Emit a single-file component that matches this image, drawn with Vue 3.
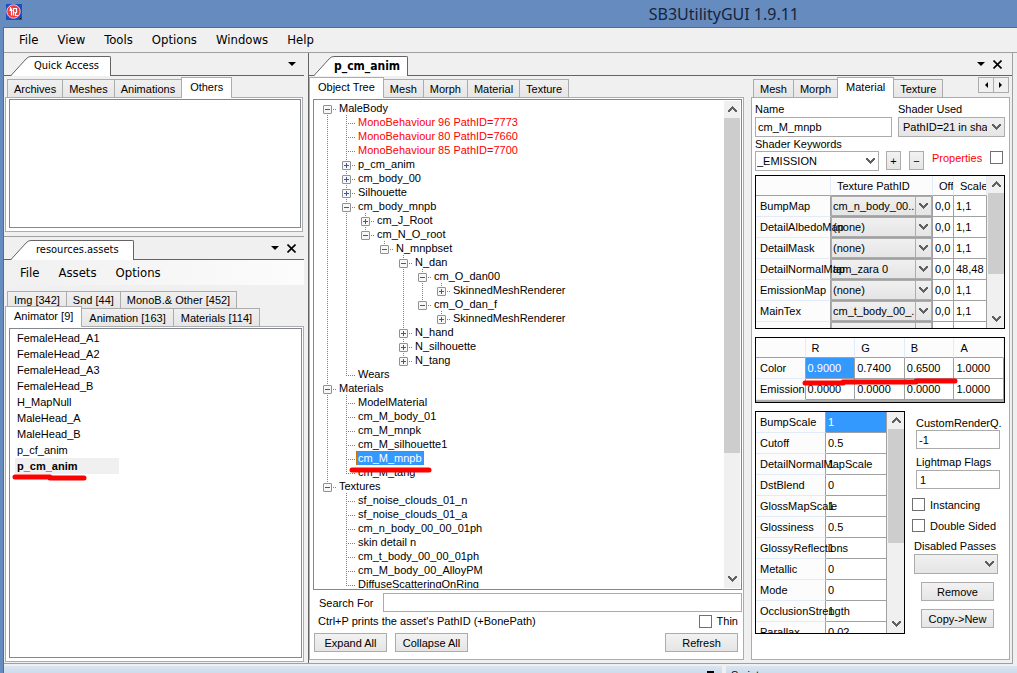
<script setup>
import { ref } from 'vue'

const mainMenu = ['File', 'View', 'Tools', 'Options', 'Windows', 'Help']
const assetMenu = ['File', 'Assets', 'Options']
const quickTabs = ['Archives', 'Meshes', 'Animations', 'Others']
const upperTabs = ['Img [342]', 'Snd [44]', 'MonoB.& Other [452]']
const lowerTabs = ['Animator [9]', 'Animation [163]', 'Materials [114]']
const treeTabs = ['Object Tree', 'Mesh', 'Morph', 'Material', 'Texture']
const detailTabs = ['Mesh', 'Morph', 'Material', 'Texture']

const animators = [
  'FemaleHead_A1', 'FemaleHead_A2', 'FemaleHead_A3', 'FemaleHead_B',
  'H_MapNull', 'MaleHead_A', 'MaleHead_B', 'p_cf_anim', 'p_cm_anim',
]

// [level, label, toggle sign, state]
const nodes = [
  [0, 'MaleBody', '-'],
  [1, 'MonoBehaviour 96 PathID=7773', '', 'alert'],
  [1, 'MonoBehaviour 80 PathID=7660', '', 'alert'],
  [1, 'MonoBehaviour 85 PathID=7700', '', 'alert'],
  [1, 'p_cm_anim', '+'],
  [1, 'cm_body_00', '+'],
  [1, 'Silhouette', '+'],
  [1, 'cm_body_mnpb', '-'],
  [2, 'cm_J_Root', '+'],
  [2, 'cm_N_O_root', '-'],
  [3, 'N_mnpbset', '-'],
  [4, 'N_dan', '-'],
  [5, 'cm_O_dan00', '-'],
  [6, 'SkinnedMeshRenderer', '+'],
  [5, 'cm_O_dan_f', '-'],
  [6, 'SkinnedMeshRenderer', '+'],
  [4, 'N_hand', '+'],
  [4, 'N_silhouette', '+'],
  [4, 'N_tang', '+'],
  [1, 'Wears', ''],
  [0, 'Materials', '-'],
  [1, 'ModelMaterial', ''],
  [1, 'cm_M_body_01', ''],
  [1, 'cm_M_mnpk', ''],
  [1, 'cm_M_silhouette1', ''],
  [1, 'cm_M_mnpb', '', 'selected'],
  [1, 'cm_M_tang', ''],
  [0, 'Textures', '-'],
  [1, 'sf_noise_clouds_01_n', ''],
  [1, 'sf_noise_clouds_01_a', ''],
  [1, 'cm_n_body_00_00_01ph', ''],
  [1, 'skin detail n', ''],
  [1, 'cm_t_body_00_00_01ph', ''],
  [1, 'cm_M_body_00_AlloyPM', ''],
  [1, 'DiffuseScatteringOnRing', ''],
]

// A guide continues below a row when a later sibling exists at that level.
function continues(index, level) {
  for (let i = index + 1; i < nodes.length; i++) {
    if (nodes[i][0] < level) return false
    if (nodes[i][0] === level) return true
  }
  return false
}

const tree = nodes.map(([level, label, sign, state], i) => ({
  label, sign, state,
  guides: Array.from({ length: level }, (_, l) => continues(i, l)),
  top: i > 0,
  bottom: continues(i, level),
}))

const textures = [
  ['BumpMap', 'cm_n_body_00...', '1,1'],
  ['DetailAlbedoMap', '(none)', '1,1'],
  ['DetailMask', '(none)', '1,1'],
  ['DetailNormalMap', 'tam_zara 0', '48,48'],
  ['EmissionMap', '(none)', '1,1'],
  ['MainTex', 'cm_t_body_00_...', '1,1'],
  ['MetallicGlossMap', 'cm_t_body_00_...', '1,1'],
]
const colors = [
  ['Color', '0.9000', '0.7400', '0.6500', '1.0000'],
  ['Emission', '0.0000', '0.0000', '0.0000', '1.0000'],
]
const values = [
  ['BumpScale', '1'], ['Cutoff', '0.5'], ['DetailNormalMapScale', '1'], ['DstBlend', '0'],
  ['GlossMapScale', '1'], ['Glossiness', '0.5'], ['GlossyReflections', '1'], ['Metallic', '0'],
  ['Mode', '0'], ['OcclusionStrength', '1'], ['Parallax', '0.02'],
]

const search = ref('')
const name = ref('cm_M_mnpb')
const queue = ref('-1')
const flags = ref('1')
</script>

<template>
  <div class="window">
    <svg class="defs" width="0" height="0" aria-hidden="true">
      <symbol id="down" viewBox="0 0 9 7"><path d="M0 0h2v1h1v1h1v1h1v-1h1v-1h1v-1h2v2h-1v1h-1v1h-1v1h-1v1h-1v-1h-1v-1h-1v-1h-1v-1h-1z" fill="#606060" /></symbol>
      <symbol id="up" viewBox="0 0 9 7"><path d="M0 6h2v-1h1v-1h1v-1h1v1h1v1h1v1h2v-2h-1v-1h-1v-1h-1v-1h-1v-1h-1v1h-1v1h-1v1h-1v1h-1z" fill="#606060" /></symbol>
      <symbol id="caret" viewBox="0 0 8 4"><path d="M0 0h8l-4 4z" fill="#000" /></symbol>
      <symbol id="close" viewBox="0 0 9 9"><path d="M0.5 0.5l8 8M8.5 0.5l-8 8" stroke="#000" stroke-width="1.6" /></symbol>
      <symbol id="slant" viewBox="0 0 20 20"><path d="M0 20L15 3Q17 0.500 20 0.500V20z" fill="#fff" /><path d="M0 19.500L15 3Q17 0.500 20 0.500" fill="none" stroke="#646464" /></symbol>
    </svg>

    <header class="titlebar">
      <svg class="logo" width="16" height="16" viewBox="0 0 16 16" aria-hidden="true">
        <rect width="16" height="16" fill="#1d4fc0" />
        <circle cx="7.500" cy="7.500" r="6.700" fill="#f03c3c" stroke="#f4c9c9" />
        <path d="M4.500 3v3.500M3.500 6.500h3M5.500 4.500v7M7.500 11.500v-7h3v4h-2M9.500 8.500v3h3" fill="none" stroke="#fff" stroke-width="1.200" />
        <rect x="14" y="14" width="1" height="1" />
      </svg>
      <h1>SB3UtilityGUI 1.9.11</h1>
    </header>

    <div class="client">
      <nav class="menu main-menu">
        <button v-for="m in mainMenu" :key="m">{{ m }}</button>
      </nav>

      <main class="dock">
        <aside class="left">
          <section class="pane quick">
            <div class="caption">
              <svg class="slant" width="20" height="20"><use href="#slant" /></svg>
              <h2>Quick Access</h2>
              <span class="tools"><button aria-label="Menu"><svg width="8" height="4"><use href="#caret" /></svg></button></span>
            </div>
            <div class="tabs" role="tablist">
              <button v-for="t in quickTabs" :key="t" role="tab" :class="{ active: t === 'Others' }">{{ t }}</button>
            </div>
            <div class="page"><div class="listbox"></div></div>
          </section>

          <section class="pane assets">
            <div class="caption">
              <svg class="slant" width="20" height="20"><use href="#slant" /></svg>
              <h2>resources.assets</h2>
              <span class="tools">
                <button aria-label="Menu"><svg width="8" height="4"><use href="#caret" /></svg></button>
                <button aria-label="Close"><svg width="9" height="9"><use href="#close" /></svg></button>
              </span>
            </div>
            <nav class="menu asset-menu">
              <button v-for="m in assetMenu" :key="m">{{ m }}</button>
            </nav>
            <div class="tabs upper" role="tablist">
              <button v-for="t in upperTabs" :key="t" role="tab">{{ t }}</button>
            </div>
            <div class="tabs lower" role="tablist">
              <button v-for="t in lowerTabs" :key="t" role="tab" :class="{ active: t === 'Animator [9]' }">{{ t }}</button>
            </div>
            <div class="page">
              <ul class="listbox animators">
                <li v-for="a in animators" :key="a" :class="{ opened: a === 'p_cm_anim' }">
                  {{ a }}
                  <svg v-if="a === 'p_cm_anim'" class="mark" width="74" height="8"><path d="M2 4H37M37 5H71" /></svg>
                </li>
              </ul>
            </div>
          </section>
        </aside>

        <section class="document">
          <div class="caption">
            <svg class="slant" width="20" height="20"><use href="#slant" /></svg>
            <h2 class="bold">p_cm_anim</h2>
            <span class="tools">
              <button aria-label="Menu"><svg width="8" height="4"><use href="#caret" /></svg></button>
              <button aria-label="Close"><svg width="9" height="9"><use href="#close" /></svg></button>
            </span>
          </div>
          <div class="split">
            <section class="pane objects">
              <div class="tabs" role="tablist">
                <button v-for="t in treeTabs" :key="t" role="tab" :class="{ active: t === 'Object Tree' }">{{ t }}</button>
              </div>
              <div class="page">
                <div class="treebox">
                  <ul class="tree">
                    <li v-for="(n, i) in tree" :key="i">
                      <i v-for="(g, l) in n.guides" :key="l" class="cell" :class="{ full: g }"></i>
                      <i class="cell joint" :class="{ above: n.top, below: n.bottom }">
                        <svg v-if="n.sign" width="9" height="9" viewBox="0 0 9 9">
                          <rect x="0.500" y="0.500" width="8" height="8" rx="0.500" fill="#f7f7f7" stroke="#919191" />
                          <path d="M2 4.500h5" stroke="#3b5a9d" />
                          <path v-if="n.sign === '+'" d="M4.500 2v5" stroke="#3b5a9d" />
                        </svg>
                      </i>
                      <span :class="n.state">{{ n.label }}</span>
                      <svg v-if="n.state === 'selected'" class="mark" width="86" height="8"><path d="M3 4H80" /></svg>
                    </li>
                  </ul>
                  <div class="scroll tree-scroll">
                    <button aria-label="Scroll up"><svg width="9" height="7"><use href="#up" /></svg></button>
                    <div class="track"><div class="thumb"></div></div>
                    <button aria-label="Scroll down"><svg width="9" height="7"><use href="#down" /></svg></button>
                  </div>
                </div>
                <div class="search">
                  <label for="search">Search For</label>
                  <input id="search" v-model="search" type="text">
                </div>
                <div class="hint">
                  <span>Ctrl+P prints the asset's PathID (+BonePath)</span>
                  <label><input type="checkbox">Thin</label>
                </div>
                <div class="actions">
                  <button class="push">Expand All</button>
                  <button class="push">Collapse All</button>
                  <button class="push last">Refresh</button>
                </div>
              </div>
            </section>

            <section class="pane details">
              <div class="tabs" role="tablist">
                <button v-for="t in detailTabs" :key="t" role="tab" :class="{ active: t === 'Material' }">{{ t }}</button>
                <span class="spin">
                  <button aria-label="Previous tabs"><svg width="4" height="6"><path d="M4 0v6l-3-3z" /></svg></button>
                  <button aria-label="Next tabs"><svg width="4" height="6"><path d="M0 0v6l3-3z" /></svg></button>
                </span>
              </div>
              <div class="page">
                <div class="fields">
                  <label for="name">Name</label>
                  <label for="shader">Shader Used</label>
                  <input id="name" v-model="name" type="text">
                  <div class="combo">
                    <select id="shader"><option>PathID=21 in shader</option></select>
                    <svg width="9" height="7"><use href="#down" /></svg>
                  </div>
                </div>
                <label class="keywords-label" for="keywords">Shader Keywords</label>
                <div class="keywords">
                  <div class="combo editable">
                    <select id="keywords"><option>_EMISSION</option></select>
                    <svg width="9" height="7"><use href="#down" /></svg>
                  </div>
                  <button class="push small">+</button>
                  <button class="push small">−</button>
                  <label class="properties">Properties<input type="checkbox"></label>
                </div>

                <div class="grid textures">
                  <table>
                    <colgroup><col class="c-name"><col><col class="c-off"><col class="c-scale"></colgroup>
                    <thead><tr><th></th><th>Texture PathID</th><th>Offset</th><th>Scale</th></tr></thead>
                    <tbody>
                      <tr v-for="t in textures" :key="t[0]">
                        <th>{{ t[0] }}</th>
                        <td class="holder">
                          <div class="combo flat">
                            <select :aria-label="t[0]"><option>{{ t[1] }}</option></select>
                            <svg width="9" height="7"><use href="#down" /></svg>
                          </div>
                        </td>
                        <td>0,0</td>
                        <td>{{ t[2] }}</td>
                      </tr>
                    </tbody>
                  </table>
                  <div class="scroll texture-scroll">
                    <button aria-label="Scroll up"><svg width="9" height="7"><use href="#up" /></svg></button>
                    <div class="track"><div class="thumb"></div></div>
                    <button aria-label="Scroll down"><svg width="9" height="7"><use href="#down" /></svg></button>
                  </div>
                </div>

                <div class="grid colors">
                  <table>
                    <colgroup><col><col><col><col><col></colgroup>
                    <thead><tr><th></th><th>R</th><th>G</th><th>B</th><th>A</th></tr></thead>
                    <tbody>
                      <tr v-for="(c, r) in colors" :key="c[0]">
                        <th>{{ c[0] }}</th>
                        <td v-for="k in 4" :key="k" :class="{ current: r === 0 && k === 1 }">{{ c[k] }}</td>
                      </tr>
                    </tbody>
                  </table>
                  <svg class="mark" width="158" height="10"><path d="M3 6H41M41 5H114M114 4H153" /></svg>
                </div>

                <div class="lower-half">
                  <div class="grid values">
                    <table>
                      <colgroup><col class="v-name"><col></colgroup>
                      <tbody>
                        <tr v-for="(v, r) in values" :key="v[0]">
                          <th>{{ v[0] }}</th>
                          <td :class="{ current: r === 0 }">{{ v[1] }}</td>
                        </tr>
                      </tbody>
                    </table>
                    <div class="scroll value-scroll">
                      <button aria-label="Scroll up"><svg width="9" height="7"><use href="#up" /></svg></button>
                      <div class="track"><div class="thumb"></div></div>
                      <button aria-label="Scroll down"><svg width="9" height="7"><use href="#down" /></svg></button>
                    </div>
                  </div>
                  <div class="side">
                    <label for="queue">CustomRenderQ.</label>
                    <input id="queue" v-model="queue" type="text">
                    <label for="flags" class="second">Lightmap Flags</label>
                    <input id="flags" v-model="flags" type="text">
                    <label class="check"><input type="checkbox">Instancing</label>
                    <label class="check"><input type="checkbox">Double Sided</label>
                    <label for="passes" class="third">Disabled Passes</label>
                    <div class="combo">
                      <select id="passes"><option></option></select>
                      <svg width="9" height="7"><use href="#down" /></svg>
                    </div>
                    <button class="push">Remove</button>
                    <button class="push">Copy-&gt;New</button>
                  </div>
                </div>
              </div>
            </section>
          </div>
        </section>
      </main>

      <footer class="bottom">
        <div class="strip"><svg width="8" height="3" aria-hidden="true"><path d="M1 1h6v2" fill="none" stroke="#000" stroke-width="2" /></svg></div>
        <div class="strip script">Script</div>
      </footer>
    </div>
  </div>
</template>

<style>
html, body { margin: 0; height: 100%; overflow: hidden; }
</style>

<style scoped>
* { box-sizing: border-box; }
.window {
  display: flex; flex-direction: column; height: 100vh; overflow: hidden;
  background: #668bbe; color: #000;
  font: 11px/14px "Liberation Sans", Arial, sans-serif;
}
.defs { position: absolute; }
button, input, select { font: inherit; color: inherit; margin: 0; padding: 0; border-radius: 0; }
ul { list-style: none; margin: 0; padding: 0; }
h1, h2 { margin: 0; font-weight: 400; }
label { white-space: nowrap; }

.titlebar { flex: none; display: flex; align-items: flex-start; height: 27px; padding: 4px 6px; }
.titlebar h1 { margin-left: auto; margin-right: 212px; font: 16px/20px "Noto Sans", sans-serif; color: #16243c; }

.client {
  flex: 1; min-height: 0; display: flex; flex-direction: column;
  margin-left: 3px; border-left: 1px solid #4a6c9e; border-top: 1px solid #4a6c9e; background: #f0f0f0;
}
.menu { display: flex; flex: none; font: 13px/24px "DejaVu Sans Condensed", "DejaVu Sans", sans-serif; }
.menu button { border: 0; background: none; }
.main-menu { height: 25px; padding: 0 15px; gap: 19px; border-bottom: 1px solid #a0a0a0; }
.asset-menu { height: 25px; margin: 0 0 6px; padding: 0 16px; gap: 19px; background: linear-gradient(90deg, #f0f0f0, #fcfcfc); }

.dock { flex: 1; min-height: 0; display: grid; grid-template-columns: 300px minmax(0, 1fr); column-gap: 4px; margin-right: 4px; border-bottom: 1px solid #a0a0a0; }
.left { display: flex; flex-direction: column; min-height: 0; }
.pane { display: flex; flex-direction: column; min-width: 0; min-height: 0; }
.quick { flex: 0 0 184px; padding-bottom: 4px; border-bottom: 1px solid #a0a0a0; }
.assets { flex: 1; }
.left .page { margin-left: 1px; }
.quick .page { margin-right: 1px; }
.assets .page { margin-bottom: 1px; }

.caption { flex: none; display: flex; align-items: flex-end; height: 23px; padding-left: 7px; border-bottom: 1px solid #646464; }
.caption .slant { margin-bottom: -1px; }
.caption h2 {
  height: 20px; margin-bottom: -1px; padding: 0 11px 0 3px; background: #fff;
  border-top: 1px solid #646464; border-right: 1px solid #646464; border-radius: 0 2px 0 0;
  font: 11px/18px "DejaVu Sans Condensed", "DejaVu Sans", sans-serif;
}
.assets .caption h2 { padding: 0 14px 0 5px; }
.document .caption { padding-left: 5px; }
.caption h2.bold { padding: 0 7px 0 0; font-size: 12px; font-weight: 700; }
.tools { display: flex; align-items: center; gap: 8px; height: 22px; margin-left: auto; padding-right: 8px; }
.document .tools { padding-right: 10px; }
.tools button { display: flex; border: 0; background: none; }

.tabs { flex: none; display: flex; align-items: flex-end; height: 21px; padding: 0 3px; }
.tabs > button {
  height: 18px; margin-right: -1px; padding: 0 7px; border: 1px solid #acacac; border-bottom: 0;
  background: linear-gradient(#f0f0f0, #e6e6e6); white-space: nowrap;
}
.tabs > button.active { position: relative; z-index: 1; height: 21px; margin-bottom: -1px; padding: 0 8px 2px; background: #fff; }
.quick .tabs > button, .details .tabs > button, .objects .tabs > button, .upper > button { padding: 0 6px; }
.upper { height: 17px; }
.upper > button { height: 17px; }
.lower, .objects .tabs { padding-left: 0; }
.lower { height: 18px; }
.lower > button.active { margin-left: 1px; }
.lower > button.active, .objects .tabs > button.active, .quick .tabs > button.active, .details .tabs > button.active { padding: 0 8px 2px; }
.page { flex: 1; min-height: 0; display: flex; flex-direction: column; border: 1px solid #acacac; background: #fff; padding: 1px 1px 3px 3px; }
.listbox { flex: 1; border: 1px solid #828790; background: #fff; }
.animators { padding: 1px 5px; }
.animators li { position: relative; height: 16px; width: 104px; padding-left: 2px; line-height: 16px; }
.animators .opened { background: #f0f0f0; font-weight: 700; }
.mark { position: absolute; overflow: visible; pointer-events: none; z-index: 2; }
.mark path { fill: none; stroke: #f00; stroke-width: 5; stroke-linecap: round; }
.animators .mark { left: -2px; top: 15px; }

.document { display: flex; flex-direction: column; min-width: 0; min-height: 0; border-left: 1px solid #646464; border-right: 1px solid #a0a0a0; }
.split { flex: 1; min-height: 0; display: grid; grid-template-columns: minmax(0, 1fr) 259px; column-gap: 7px; padding: 0 2px 3px 0; }
.objects .page { padding: 1px 1px 7px 3px; }
.treebox { flex: 1; min-height: 0; display: flex; padding: 1px 1px 1px 2px; border: 1px solid #828790; }
.tree { flex: 1; min-width: 0; overflow: hidden; }
.tree li { position: relative; display: flex; height: 14px; padding-left: 2px; white-space: nowrap; }
.tree li > span { height: 14px; padding: 0 2px; }
.tree .alert { color: #f00; }
.tree .selected { background: #3399ff; color: #fff; outline: 1px dotted #d07000; outline-offset: -1px; }
.tree .mark { left: 33px; top: 15px; }
.cell { position: relative; flex: none; width: 19px; height: 14px; }
.full { background: repeating-linear-gradient(#808080 0 1px, transparent 1px 2px) 9px 0 / 1px 14px no-repeat; }
.joint {
  display: flex; align-items: center; justify-content: center; padding-top: 2px;
  background: repeating-linear-gradient(90deg, #808080 0 1px, transparent 1px 2px) 9px 8px / 9px 1px no-repeat;
}
.joint svg { position: relative; z-index: 1; }
.joint::before, .joint::after { content: ""; position: absolute; left: 9px; width: 1px; }
.above::before { top: 0; height: 8px; background: repeating-linear-gradient(#808080 0 1px, transparent 1px 2px); }
.below::after { top: 8px; height: 6px; background: repeating-linear-gradient(#808080 0 1px, transparent 1px 2px); }

.scroll { flex: none; display: flex; flex-direction: column; width: 16px; background: #f0f0f0; }
.scroll button { display: flex; align-items: center; justify-content: center; height: 17px; border: 0; background: none; }
.track { flex: 1; }
.thumb { background: #cdcdcd; }
.tree-scroll .thumb { height: 74%; }
.texture-scroll .thumb { height: 69%; }
.value-scroll .thumb { height: 61%; }

input[type="text"] { width: 100%; height: 20px; padding: 0 3px; border: 1px solid #ababab; background: #fff; }
#name, #queue { padding-left: 2px; }
input[type="checkbox"] { appearance: none; width: 13px; height: 13px; border: 1px solid #707070; background: #fff; }
.push { width: 73px; height: 19px; border: 1px solid #acacac; background: linear-gradient(#f2f2f2, #e5e5e5); }
.search { display: flex; align-items: center; margin-top: 3px; gap: 10px; padding-left: 6px; }
.search input { flex: 1; min-width: 0; height: 19px; }
.hint { display: flex; align-items: center; justify-content: space-between; height: 16px; margin: 1px 4px 4px 5px; }
.hint label, .check { display: flex; align-items: center; gap: 5px; }
.actions { display: flex; gap: 8px; padding: 0 4px 0 1px; }
.last { margin-left: auto; }

.details .tabs { padding: 0 0 0 2px; }
.spin { display: flex; height: 20px; margin: 0 1px 0 auto; padding-bottom: 4px; }
.spin button { display: flex; align-items: center; justify-content: center; width: 16px; border: 1px solid #acacac; background: #f0f0f0; }
.spin button + button { margin-left: -1px; }
.details .page { padding: 4px 4px 0 3px; }
.fields { display: grid; grid-template-columns: 137px minmax(0, 1fr); column-gap: 6px; row-gap: 1px; }
.combo { position: relative; height: 20px; }
.combo select { appearance: none; width: 100%; height: 100%; padding: 0 17px 0 4px; border: 1px solid #acacac; background: linear-gradient(#f0f0f0, #e5e5e5); outline: 0; }
.combo svg { position: absolute; right: 4px; top: 7px; pointer-events: none; }
.editable { width: 124px; }
.editable select { padding-left: 1px; background: #fff; }
.keywords { display: flex; align-items: flex-start; }
.small { width: 15px; line-height: 14px; margin-left: 8px; }
.editable + .small { margin-left: 7px; }
.properties { display: flex; flex: 1; justify-content: space-between; margin: 0 2px 0 8px; color: #f00; }

.grid { position: relative; flex: none; display: flex; justify-content: space-between; align-items: flex-start; border: 1px solid #000; background: #f0f0f0; }
.grid table { width: 100%; table-layout: fixed; border-collapse: separate; border-spacing: 0; }
.grid .scroll { height: 100%; }
.textures table, .values table { width: calc(100% - 17px); }
.grid tr { height: 21px; }
.grid thead tr { height: 20px; }
.grid th, .grid td { padding: 0 2px; font-weight: 400; text-align: left; white-space: nowrap; border-right: 1px solid #a0a0a0; border-bottom: 1px solid #a0a0a0; background: #fff; }
.grid th { background: #fcfcfc; }
.grid tbody th { position: relative; z-index: 1; padding-left: 4px; border-bottom-color: #e1ecf8; }
.grid thead th { padding: 0 0 0 6px; border-right-color: #e1ecf8; overflow: hidden; }
.grid td.current { background: #3399ff; color: #fff; }
.grid td.holder { padding: 0; }
.textures { height: 154px; margin-top: 4px; }
.textures, .values { overflow: hidden; }
.c-name { width: 75px; }
.c-off { width: 21px; }
.c-scale { width: 33px; }
.flat select { padding-left: 1px; }
.flat::after { content: ""; position: absolute; right: 16px; top: 1px; bottom: 1px; border-left: 1px solid #acacac; pointer-events: none; }
.colors { height: 66px; margin-top: 8px; background: #ababab; }
.colors .mark { left: 46px; top: 39px; }
.lower-half { display: grid; grid-template-columns: 150px minmax(0, 1fr); margin-top: 8px; }
.values { height: 223px; }
.v-name { width: 70px; }
.side { display: flex; flex-direction: column; padding: 5px 5px 0 11px; }
.side label { margin-right: -8px; }
.side input[type="text"] { height: 19px; }
.side .second { margin: 6px 0 1px; }
.side .check { height: 13px; margin: 9px -8px 0 -4px; }
.side .check + .check { margin-top: 8px; }
.side .third { margin: 7px -8px 1px -2px; }
.side .combo { margin: 0 2px 0 -2px; }
.side .push { margin: 8px 0 0 5px; }

.bottom { flex: none; display: grid; grid-template-columns: 718px 1fr; column-gap: 4px; height: 9px; padding-top: 2px; overflow: hidden; }
.strip { height: 7px; background: linear-gradient(#d9e5f2, #cddceb); text-align: right; line-height: 3px; overflow: hidden; }
.strip svg { margin: 5px 8px 0 0; }
.script { padding: 2px 5px 0; text-align: left; line-height: 14px; }
</style>
